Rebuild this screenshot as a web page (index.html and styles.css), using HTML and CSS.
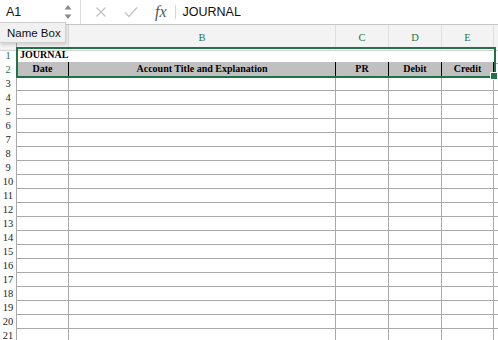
FILE: index.html
```html
<!DOCTYPE html>
<html>
<head>
<meta charset="utf-8">
<link rel="stylesheet" href="styles.css">
</head>
<body>
<div class="app">
  <div class="toolbar">
    <div class="namebox">A1</div>
    <div class="spinner">
      <svg width="8" height="16" viewBox="0 0 8 16"><path d="M4 1 L7.5 5.5 L0.5 5.5 Z" fill="#8a8a8a"/><path d="M4 15 L7.5 10.5 L0.5 10.5 Z" fill="#8a8a8a"/></svg>
    </div>
    <div class="sep"></div>
    <div class="icons">
      <svg class="ico" width="12" height="12" viewBox="0 0 12 12"><path d="M1.5 1.5 L10.5 10.5 M10.5 1.5 L1.5 10.5" stroke="#c4c4c4" stroke-width="1.4" fill="none"/></svg>
      <svg class="ico" width="14" height="12" viewBox="0 0 14 12"><path d="M1 6.5 L5 10.5 L13 1.5" stroke="#c4c4c4" stroke-width="1.4" fill="none"/></svg>
      <span class="fx">fx</span>
    </div>
    <div class="sep2"></div>
    <div class="formula">JOURNAL</div>
  </div>
  <div class="sheet">
    <div class="row colhead">
      <div class="rh corner"></div>
      <div class="ch"></div>
      <div class="ch sel">B</div>
      <div class="ch sel">C</div>
      <div class="ch sel">D</div>
      <div class="ch sel">E</div>
      <div class="ch last"></div>
    </div>
    <div class="row r1">
      <div class="rh sel">1</div>
      <div class="merged">JOURNAL</div>
      <div class="c last"></div>
    </div>
    <div class="row r2">
      <div class="rh sel">2</div>
      <div class="c hd">Date</div>
      <div class="c hd">Account Title and Explanation</div>
      <div class="c hd">PR</div>
      <div class="c hd">Debit</div>
      <div class="c hd">Credit</div>
      <div class="c last"></div>
    </div>
    <div class="row"><div class="rh">3</div><div class="c"></div><div class="c"></div><div class="c"></div><div class="c"></div><div class="c"></div><div class="c last"></div></div>
    <div class="row"><div class="rh">4</div><div class="c"></div><div class="c"></div><div class="c"></div><div class="c"></div><div class="c"></div><div class="c last"></div></div>
    <div class="row"><div class="rh">5</div><div class="c"></div><div class="c"></div><div class="c"></div><div class="c"></div><div class="c"></div><div class="c last"></div></div>
    <div class="row"><div class="rh">6</div><div class="c"></div><div class="c"></div><div class="c"></div><div class="c"></div><div class="c"></div><div class="c last"></div></div>
    <div class="row"><div class="rh">7</div><div class="c"></div><div class="c"></div><div class="c"></div><div class="c"></div><div class="c"></div><div class="c last"></div></div>
    <div class="row"><div class="rh">8</div><div class="c"></div><div class="c"></div><div class="c"></div><div class="c"></div><div class="c"></div><div class="c last"></div></div>
    <div class="row"><div class="rh">9</div><div class="c"></div><div class="c"></div><div class="c"></div><div class="c"></div><div class="c"></div><div class="c last"></div></div>
    <div class="row"><div class="rh">10</div><div class="c"></div><div class="c"></div><div class="c"></div><div class="c"></div><div class="c"></div><div class="c last"></div></div>
    <div class="row"><div class="rh">11</div><div class="c"></div><div class="c"></div><div class="c"></div><div class="c"></div><div class="c"></div><div class="c last"></div></div>
    <div class="row"><div class="rh">12</div><div class="c"></div><div class="c"></div><div class="c"></div><div class="c"></div><div class="c"></div><div class="c last"></div></div>
    <div class="row"><div class="rh">13</div><div class="c"></div><div class="c"></div><div class="c"></div><div class="c"></div><div class="c"></div><div class="c last"></div></div>
    <div class="row"><div class="rh">14</div><div class="c"></div><div class="c"></div><div class="c"></div><div class="c"></div><div class="c"></div><div class="c last"></div></div>
    <div class="row"><div class="rh">15</div><div class="c"></div><div class="c"></div><div class="c"></div><div class="c"></div><div class="c"></div><div class="c last"></div></div>
    <div class="row"><div class="rh">16</div><div class="c"></div><div class="c"></div><div class="c"></div><div class="c"></div><div class="c"></div><div class="c last"></div></div>
    <div class="row"><div class="rh">17</div><div class="c"></div><div class="c"></div><div class="c"></div><div class="c"></div><div class="c"></div><div class="c last"></div></div>
    <div class="row"><div class="rh">18</div><div class="c"></div><div class="c"></div><div class="c"></div><div class="c"></div><div class="c"></div><div class="c last"></div></div>
    <div class="row"><div class="rh">19</div><div class="c"></div><div class="c"></div><div class="c"></div><div class="c"></div><div class="c"></div><div class="c last"></div></div>
    <div class="row"><div class="rh">20</div><div class="c"></div><div class="c"></div><div class="c"></div><div class="c"></div><div class="c"></div><div class="c last"></div></div>
    <div class="row"><div class="rh">21</div><div class="c"></div><div class="c"></div><div class="c"></div><div class="c"></div><div class="c"></div><div class="c last"></div></div>
    <div class="selection"><div class="handle"></div></div>
  </div>
  <div class="tooltip">Name Box</div>
</div>
</body>
</html>
```
FILE: styles.css
```css
html, body {
  margin: 0;
  padding: 0;
  background: #fff;
}
.app {
  position: relative;
  width: 498px;
  height: 340px;
  overflow: hidden;
  font-family: "Liberation Sans", Arial, sans-serif;
}
.toolbar {
  height: 24px;
  border-bottom: 1px solid #c6c6c6;
  box-shadow: 0 1px 0 #e4e4e4;
  display: flex;
  align-items: center;
  box-sizing: content-box;
}
.namebox {
  width: 62px;
  padding-left: 6px;
  font-size: 12.5px;
  color: #111;
  box-sizing: border-box;
}
.spinner {
  width: 14px;
  display: flex;
  align-items: center;
  padding-left: 2px;
  box-sizing: border-box;
}
.spinner svg { display: block; }
.sep {
  width: 1px;
  height: 24px;
  background: #dcdcdc;
  margin-left: 4px;
}
.icons {
  display: flex;
  align-items: center;
  padding-left: 14px;
}
.icons .ico { display: block; }
.icons .ico + .ico { margin-left: 17px; }
.fx {
  font-family: "Liberation Serif", "Times New Roman", serif;
  font-style: italic;
  font-size: 16px;
  color: #555;
  margin-left: 17px;
  line-height: 1;
}
.sep2 {
  width: 1px;
  height: 14px;
  background: #d6d6d6;
  margin-left: 8px;
}
.formula {
  font-size: 12.5px;
  color: #111;
  margin-left: 7px;
}
.sheet {
  position: relative;
  font-family: "Liberation Serif", "Times New Roman", serif;
  font-size: 10px;
}
.row {
  display: grid;
  grid-template-columns: 17px 52px 267px 53px 53px 52px 1fr;
  height: 14px;
}
.row.colhead {
  height: 23px;
  background: #f3f3f3;
}
.ch {
  border-right: 1px solid #dedede;
  border-bottom: 1px solid #d2d2d2;
  text-align: center;
  line-height: 25px;
  color: #333;
  font-size: 10.5px;
  box-sizing: border-box;
}
.ch.sel { color: #2a7346; }
.ch.last { border-right: none; }
.corner {
  background: #f3f3f3;
  border-right: 1px solid #dedede;
  border-bottom: 1px solid #d2d2d2;
}
.rh {
  border-right: 1px solid #a9a9a9;
  text-align: center;
  line-height: 15px;
  color: #1c1c2a;
  font-size: 10.5px;
  box-sizing: border-box;
}
.rh.sel { color: #2a7346; }
.c {
  border-right: 1px solid #a9a9a9;
  border-bottom: 1px solid #a9a9a9;
  box-sizing: border-box;
}
.c.last { border-right: none; }
.merged {
  grid-column: 2 / 7;
  border-bottom: 1px solid #000;
  font-weight: bold;
  padding-left: 3px;
  line-height: 14px;
  color: #000;
  box-sizing: border-box;
}
.r1 .rh { line-height: 16px; }
.r2 .hd {
  background: #c0c0c0;
  border-right: 1px solid #000;
  font-weight: bold;
  text-align: center;
  line-height: 13px;
  color: #000;
}
.r2 .hd:first-of-type { border-left: 1px solid #000; }
.selection {
  position: absolute;
  left: 16px;
  top: 22px;
  width: 480px;
  height: 31px;
  border: 2px solid #1f7346;
  box-sizing: border-box;
  pointer-events: none;
}
.handle {
  position: absolute;
  right: -4px;
  bottom: -4px;
  width: 6px;
  height: 6px;
  background: #1f7346;
  border: 1px solid #fff;
}
.tooltip {
  position: absolute;
  left: 0;
  top: 22px;
  width: 66px;
  height: 21px;
  background: #f1f1f1;
  border: 1px solid #cfcfcf;
  border-left: none;
  box-shadow: 1px 2px 3px rgba(0,0,0,0.15);
  font-size: 11.5px;
  line-height: 21px;
  padding-left: 7px;
  box-sizing: border-box;
  color: #111;
}
```
